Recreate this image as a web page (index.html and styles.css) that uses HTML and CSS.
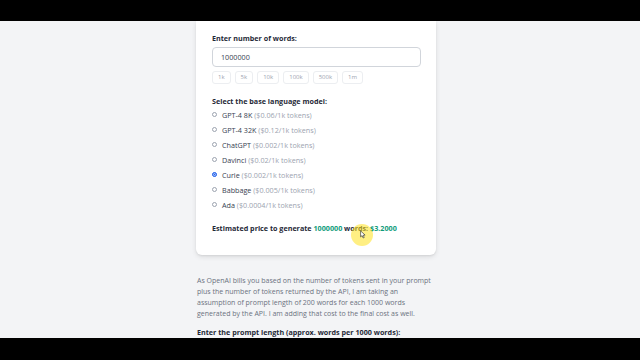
FILE: index.html
```html
<!DOCTYPE html>
<html lang="en">
<head>
<meta charset="utf-8">
<title>OpenAI cost calculator</title>
<link rel="stylesheet" href="styles.css">
</head>
<body>
<div class="frame">
  <div class="bar bar-top"></div>
  <div class="viewport">
    <div class="container">
      <div class="card">
        <div class="label">Enter number of words:</div>
        <div class="input">1000000</div>
        <div class="chips">
          <span class="chip">1k</span>
          <span class="chip">5k</span>
          <span class="chip">10k</span>
          <span class="chip">100k</span>
          <span class="chip">500k</span>
          <span class="chip">1m</span>
        </div>
        <div class="label label-models">Select the base language model:</div>
        <ul class="models">
          <li class="model"><span class="radio"></span>GPT-4 8K <span class="price">($0.06/1k tokens)</span></li>
          <li class="model"><span class="radio"></span>GPT-4 32K <span class="price">($0.12/1k tokens)</span></li>
          <li class="model"><span class="radio"></span>ChatGPT <span class="price">($0.002/1k tokens)</span></li>
          <li class="model"><span class="radio"></span>Davinci <span class="price">($0.02/1k tokens)</span></li>
          <li class="model"><span class="radio radio-on"></span>Curie <span class="price">($0.002/1k tokens)</span></li>
          <li class="model"><span class="radio"></span>Babbage <span class="price">($0.005/1k tokens)</span></li>
          <li class="model"><span class="radio"></span>Ada <span class="price">($0.0004/1k tokens)</span></li>
        </ul>
        <div class="estimate">Estimated price to generate <span class="accent">1000000</span> words: <span class="accent">$3.2000</span>
          <span class="cursor">
            <span class="halo"></span>
            <svg class="arrow" viewBox="0 0 10 14" width="6" height="9"><path d="M1 1 L1 11 L3.5 8.8 L5.3 12.8 L7 12 L5.3 8.2 L8.5 8 Z" fill="#fff" stroke="#222" stroke-width="1"/></svg>
          </span>
        </div>
      </div>
      <p class="note">As OpenAI bills you based on the number of tokens sent in your prompt plus the number of tokens returned by the API, I am taking an assumption of prompt length of 200 words for each 1000 words generated by the API. I am adding that cost to the final cost as well.</p>
      <div class="label label-prompt">Enter the prompt length (approx. words per 1000 words):</div>
    </div>
  </div>
  <div class="bar bar-bottom"></div>
</div>
</body>
</html>
```
FILE: styles.css
```css
* { box-sizing: border-box; }
html, body { margin: 0; padding: 0; }
body {
  background: #f3f4f6;
  font-family: "Open Sans", "Noto Sans", sans-serif;
  font-size: 7.2px;
  color: #1f2937;
}
.frame {
  width: 640px;
  height: 360px;
  display: flex;
  flex-direction: column;
  overflow: hidden;
}
.bar { background: #000; flex: none; }
.bar-top { height: 21px; }
.bar-bottom { height: 22px; }
.viewport { flex: 1; overflow: hidden; }
.container {
  width: 240px;
  margin-left: 196px;
}
.card {
  background: #fff;
  border-radius: 0 0 6px 6px;
  box-shadow: 0 2px 5px rgba(0,0,0,0.10), 0 1px 2px rgba(0,0,0,0.06);
  padding: 12px 15px 22px 16px;
}
.label {
  font-weight: 700;
  line-height: 10px;
  color: #1f2937;
}
.input {
  margin-top: 4px;
  height: 20px;
  border: 1px solid #d1d5db;
  border-radius: 4px;
  padding-left: 8px;
  line-height: 18px;
  color: #374151;
}
.chips {
  margin-top: 4px;
  display: flex;
  gap: 4px;
}
.chip {
  height: 13px;
  line-height: 11px;
  padding: 0 5px;
  border: 1px solid #eceef1;
  border-radius: 3px;
  font-size: 6px;
  color: #9ca3af;
}
.label-models { margin-top: 12px; }
.models {
  list-style: none;
  margin: 1px 0 0;
  padding: 0;
}
.model {
  height: 15px;
  display: flex;
  align-items: center;
  color: #374151;
  white-space: pre;
}
.radio {
  width: 5px;
  height: 5px;
  border: 1px solid #9ca3af;
  border-radius: 50%;
  margin: 0 5px 0 0;
  flex: none;
}
.radio-on {
  border-color: #2563eb;
  background: #2563eb;
  box-shadow: inset 0 0 0 0.5px #fff;
}
.price { color: #9ca3af; }
.estimate {
  position: relative;
  margin-top: 11px;
  font-weight: 700;
  line-height: 10px;
}
.accent { color: #0f9b7a; }
.cursor {
  position: absolute;
  left: 139px;
  top: 1px;
  width: 22px;
  height: 22px;
}
.halo {
  position: absolute;
  inset: 0;
  border-radius: 50%;
  background: rgba(255, 226, 30, 0.55);
}
.arrow {
  position: absolute;
  left: 9px;
  top: 6px;
}
.note {
  margin: 20px 0 0;
  padding-left: 1px;
  font-size: 7px;
  line-height: 11px;
  color: #6b7280;
}
.label-prompt { margin-top: 8px; padding-left: 1px; }
```
